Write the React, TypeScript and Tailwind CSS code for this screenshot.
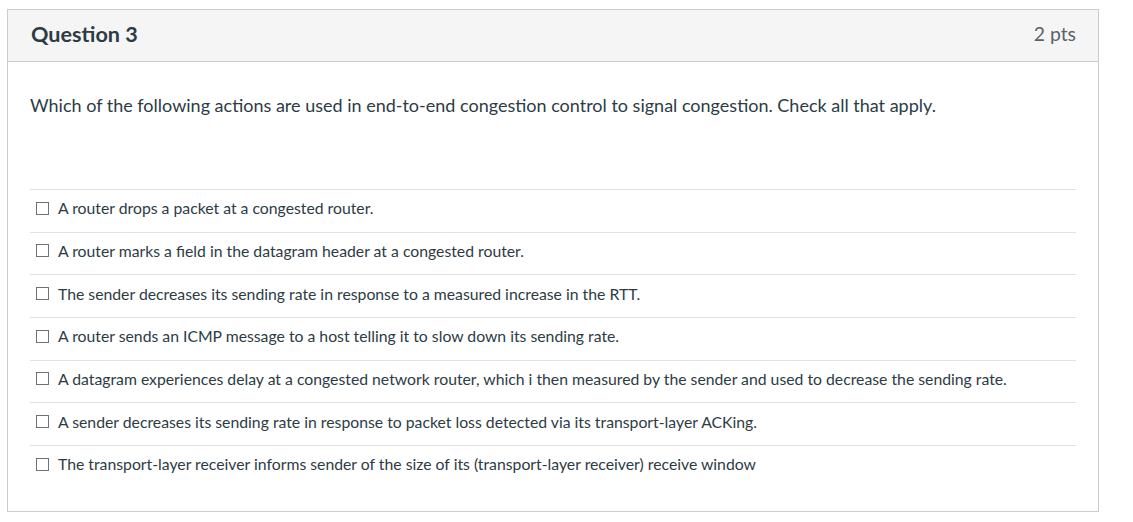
import React from 'react';

const answers = [
  'A router drops a packet at a congested router.',
  'A router marks a field in the datagram header at a congested router.',
  'The sender decreases its sending rate in response to a measured increase in the RTT.',
  'A router sends an ICMP message to a host telling it to slow down its sending rate.',
  'A datagram experiences delay at a congested network router, which i then measured by the sender and used to decrease the sending rate.',
  'A sender decreases its sending rate in response to packet loss detected via its transport-layer ACKing.',
  'The transport-layer receiver informs sender of the size of its (transport-layer receiver) receive window',
];

export default function App() {
  return (
    <div className="w-[1133px] h-[522px] bg-white pt-[9px] pl-[7px]" style={{ fontFamily: 'Lato, "Liberation Sans", sans-serif' }}>
      <div className="w-[1092px] h-[503px] border border-[#c7cdd1] flex flex-col">
        {/* header */}
        <div className="h-[52px] bg-[#f5f5f5] border-b border-[#c7cdd1] flex items-center justify-between pl-[23px] pr-[22px] pb-[3px]">
          <span className="text-[21.6px] font-bold text-[#2d3b45]">Question 3</span>
          <span className="text-[19.4px] text-[#5a6269]">2 pts</span>
        </div>

        <div className="px-[22px]">
          <div className="h-[127px] pt-[31px] text-[18px] text-[#2d3b45] leading-[24px]">
            Which of the following actions are used in end-to-end congestion control to signal congestion. Check all that apply.
          </div>

          <div className="flex flex-col">
            {answers.map((a) => (
              <label key={a} className="h-[42.67px] border-t border-[#dfe3e6] flex items-center gap-[9px] pl-[6px] pb-[5px]">
                <span className="w-[13px] h-[13px] border border-[#6f7378] bg-white shrink-0" />
                <span className="text-[15.78px] text-[#2d3b45]">{a}</span>
              </label>
            ))}
          </div>
        </div>
      </div>
    </div>
  );
}
